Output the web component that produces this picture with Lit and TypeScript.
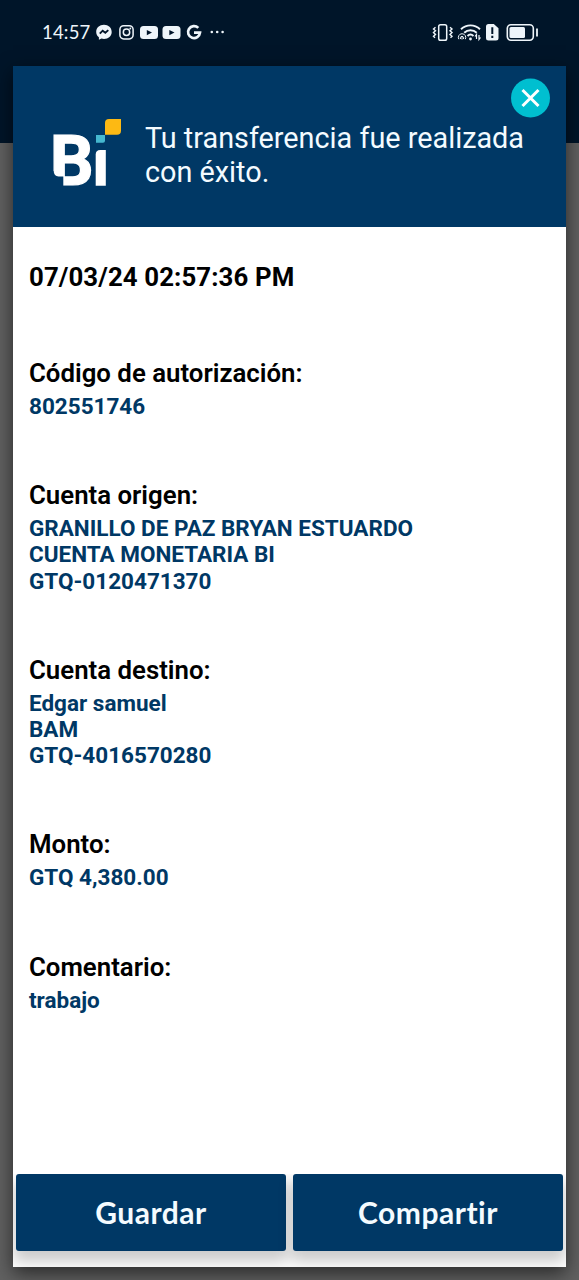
import { LitElement, html, css, svg } from 'lit'
import { customElement, property } from 'lit/decorators.js'

interface Detail {
  label: string
  lines: string[]
}

const details: Detail[] = [
  { label: 'Código de autorización:', lines: ['802551746'] },
  { label: 'Cuenta origen:', lines: ['GRANILLO DE PAZ BRYAN ESTUARDO', 'CUENTA MONETARIA BI', 'GTQ-0120471370'] },
  { label: 'Cuenta destino:', lines: ['Edgar samuel', 'BAM', 'GTQ-4016570280'] },
  { label: 'Monto:', lines: ['GTQ 4,380.00'] },
  { label: 'Comentario:', lines: ['trabajo'] },
]

@customElement('status-bar')
export class StatusBar extends LitElement {
  static styles = css`
    :host {
      display: flex;
      justify-content: space-between;
      align-items: center;
      height: 20px;
      padding: 22px 40px 0 42px;
      color: #eef5fa;
      font: 400 18px/20px Lato, sans-serif;
    }

    .group {
      display: flex;
      align-items: center;
    }

    .time {
      width: 54px;
      font-size: 18.5px;
      letter-spacing: 0.2px;
      white-space: nowrap;
    }

    svg {
      display: block;
    }
  `

  private youtube(x: number) {
    return svg`
      <rect x=${x} y="4" width="18" height="13" rx="3.5" fill="currentColor" />
      <path d="M${x + 6.8} 8 L${x + 12} 10.6 L${x + 6.8} 13.2 Z" fill="#00152a" />
    `
  }

  render() {
    return html`
      <div class="group">
        <span class="time">14:57</span>
        <svg width="132" height="20" viewBox="0 0 132 20" fill="none" stroke="currentColor">
          <path d="M8 2.8c-4.5 0-7.8 3.1-7.8 7.1 0 2.2 1 4 2.7 5.3v2.6l2.6-1.3c.8.3 1.6.4 2.5.4 4.4 0 7.7-3 7.7-7s-3.3-7.1-7.7-7.1Z" fill="currentColor" stroke="none" />
          <path d="m3.8 11.7 2.9-3 2.6 2 3-2.6" stroke="#00152a" stroke-width="1.9" />
          <rect x="23.9" y="3.7" width="13.2" height="13.2" rx="3.8" stroke-width="1.5" />
          <circle cx="30.5" cy="10.3" r="3.2" stroke-width="1.5" />
          <circle cx="34.3" cy="6.5" r=".9" fill="currentColor" stroke="none" />
          <g stroke="none">${this.youtube(44)}${this.youtube(66.5)}</g>
          <path d="M102.3 5.9A6 6 0 1 0 104 10.7H98" stroke-width="2.7" />
          <g fill="currentColor" stroke="none">
            <circle cx="115.8" cy="10" r="1.3" />
            <circle cx="121.2" cy="10" r="1.3" />
            <circle cx="126.6" cy="10" r="1.3" />
          </g>
        </svg>
      </div>
      <svg width="107" height="20" viewBox="0 0 107 20" fill="none" stroke="currentColor">
        <rect x="6.7" y="2.7" width="8" height="15.5" rx="1.8" stroke-width="1.5" />
        <path d="M3.5 5.2 1.5 7l2 1.8-2 1.8 2 1.8-2 1.8 1.5 1.5M18 5.2 20 7l-2 1.8 2 1.8-2 1.8 2 1.8-1.5 1.5" stroke-width="1.4" />
        <path d="M29 7.3c5.5-5.2 13.5-5.2 19 0M32.2 10.7c3.5-3.3 9-3.3 12.5 0M35.5 14c1.8-1.7 4.2-1.7 6 0" stroke-width="1.9" />
        <circle cx="38.5" cy="17" r="1.4" fill="currentColor" stroke="none" />
        <path d="M26.8 17.2a3.7 3.7 0 1 1 6.5 0M28.6 17a1.7 1.7 0 1 1 2.8 0M30 14.5v3" stroke-width="1" />
        <path d="M44.5 17v-4.5l-1.5 2M47 13v4.5l1.5-2" stroke-width="1.2" />
        <path d="M56.5 2h5.3l4.7 4.3v9.7q0 2.500-2.500 2.500h-7.500q-2.500 0-2.500-2.500v-11.500q0-2.500 2.500-2.500Z" fill="currentColor" stroke="none" />
        <path d="M60.3 5.3v6.8M60.3 13.8v2.2" stroke="#00152a" stroke-width="2" />
        <rect x="75.3" y="2.7" width="26" height="15.5" rx="3.6" stroke-width="1.6" />
        <rect x="77.5" y="5" width="15.5" height="11" rx="1.5" fill="currentColor" stroke="none" />
        <path d="M105 6.5v8" stroke-width="1.8" />
      </svg>
    `
  }
}

@customElement('transfer-header')
export class TransferHeader extends LitElement {
  static styles = css`
    :host {
      position: relative;
      display: flex;
      align-items: flex-start;
      box-sizing: border-box;
      height: 161px;
      padding: 51px 16px 0 40px;
      background: #003865;
    }

    .logo {
      flex: none;
      display: block;
      margin-right: 23px;
      overflow: visible;
    }

    .logo-letter {
      font: 700 70px Roboto, sans-serif;
      stroke: #fff;
      stroke-width: 1.2px;
    }

    h1 {
      margin: 4px 0 0;
      color: #f4fbff;
      font: 400 28.8px/34px Roboto, sans-serif;
      white-space: nowrap;
    }

    .close {
      position: absolute;
      top: 12px;
      right: 16px;
      width: 40px;
      height: 40px;
      padding: 0;
      border: 0;
      background: none;
    }

    .close svg {
      display: block;
    }
  `

  render() {
    return html`
      <svg class="logo" width="69" height="72" viewBox="0 0 69 72">
        <text class="logo-letter" x="-3.2" y="68" textLength="44" lengthAdjust="spacingAndGlyphs" fill="#fff">B</text>
        <path d="M-1 54h1.5q.5 5 5 5.500h4.800V70H-1Z" fill="#003865" />
        <path d="M42.7 37.5q0-4.5 4.5-4.5h5.600v35.700H42.7Z" fill="#fff" />
        <path d="M43 18h9v5.7q0 2-2 2h-7Z" fill="#45b8cf" />
        <path d="M52 17.7V6q0-4 4-4h12v11.700q0 4-4 4Z" fill="#fdb913" />
      </svg>
      <h1>Tu transferencia fue realizada<br />con éxito.</h1>
      <button class="close" aria-label="Cerrar">
        <svg width="40" height="40" viewBox="0 0 40 40">
          <circle cx="20.5" cy="20" r="19.5" fill="#00bfd0" />
          <path d="m12.5 12 16 16M28.5 12l-16 16" stroke="#fff" stroke-width="3" />
        </svg>
      </button>
    `
  }
}

@customElement('detail-item')
export class DetailItem extends LitElement {
  @property({ attribute: false }) detail!: Detail

  static styles = css`
    :host {
      display: block;
      font-family: Roboto, sans-serif;
    }

    h2 {
      margin: 0 0 4px;
      color: #000;
      font-size: 25.8px;
      font-weight: 600;
      line-height: 31px;
    }

    p {
      margin: 0;
      color: #003865;
      font-size: 22.5px;
      font-weight: 700;
      line-height: 26.2px;
    }
  `

  render() {
    return html`
      <h2>${this.detail.label}</h2>
      ${this.detail.lines.map((line) => html`<p>${line}</p>`)}
    `
  }
}

@customElement('app-root')
export class AppRoot extends LitElement {
  static styles = css`
    :host {
      display: block;
      box-sizing: border-box;
      height: 1280px;
      overflow: hidden;
      background: linear-gradient(#001529 143px, #616161 143px);
    }

    .sheet {
      display: flex;
      flex-direction: column;
      height: 1201px;
      margin: 24px 13px 0;
      background: #fff;
      box-shadow: 0 6px 18px rgba(0, 0, 0, 0.6);
    }

    .body {
      flex: 1;
      padding: 35px 16px 0;
    }

    .date {
      margin: 0 0 65px;
      color: #000;
      font: 700 25.8px/31px Roboto, sans-serif;
      letter-spacing: 0.1px;
    }

    .list {
      display: flex;
      flex-direction: column;
      gap: 61px;
    }

    .actions {
      display: flex;
      gap: 7px;
      padding: 0 3px 16px;
      overflow: hidden;
    }

    .actions button {
      flex: 1;
      height: 77px;
      padding: 0;
      border: 0;
      border-radius: 3px;
      background: #003865;
      box-shadow: 0 9px 14px 2px rgba(0, 0, 0, 0.2);
      color: #f4fbff;
      font: 700 30px/77px Lato, sans-serif;
      font-variant-ligatures: none;
      letter-spacing: 0.5px;
    }
  `

  render() {
    return html`
      <status-bar></status-bar>
      <main class="sheet">
        <transfer-header></transfer-header>
        <div class="body">
          <p class="date">07/03/24 02:57:36 PM</p>
          <div class="list">
            ${details.map((detail) => html`<detail-item .detail=${detail}></detail-item>`)}
          </div>
        </div>
        <div class="actions">
          <button>Guardar</button>
          <button>Compartir</button>
        </div>
      </main>
    `
  }
}

declare global {
  interface HTMLElementTagNameMap {
    'app-root': AppRoot
    'status-bar': StatusBar
    'transfer-header': TransferHeader
    'detail-item': DetailItem
  }
}
